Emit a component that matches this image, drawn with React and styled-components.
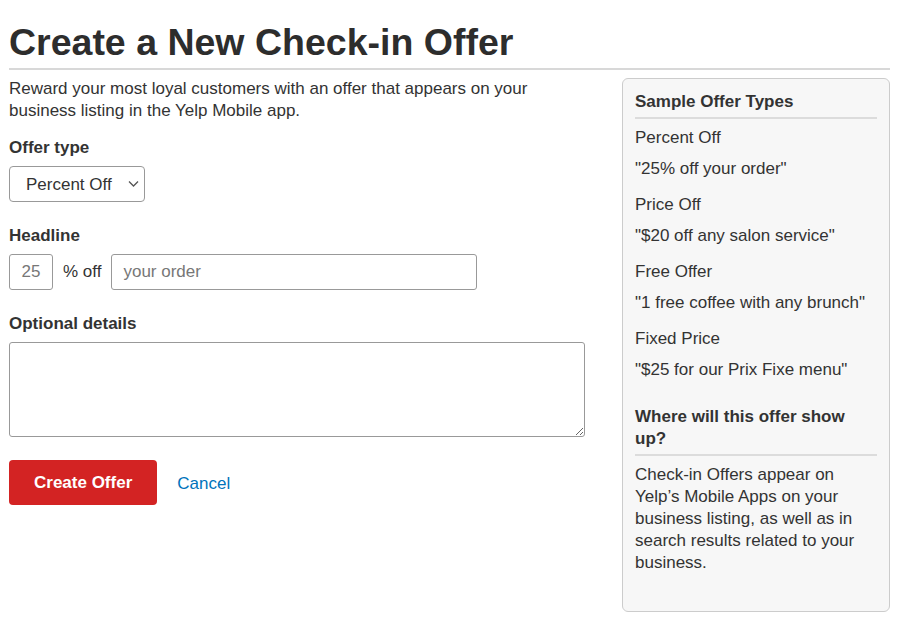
import React from "react";
import styled, { createGlobalStyle } from "styled-components";

const GlobalStyle = createGlobalStyle`
  body {
    margin: 0;
    background: #fff;
    font-family: "Liberation Sans", Arial, Helvetica, sans-serif;
    color: #333;
  }
`;

const Page = styled.div`
  padding: 18px 14px 0 9px;
`;

const Title = styled.h1`
  margin: 0;
  font-size: 37.5px;
  line-height: 48px;
  font-weight: 700;
  color: #2d2d2d;
  padding-bottom: 2px;
  border-bottom: 2px solid #d8d8d8;
`;

const Columns = styled.div`
  display: flex;
  align-items: flex-start;
  gap: 37px;
  padding-top: 8px;
`;

const Main = styled.div`
  width: 576px;
  flex-shrink: 0;
`;

const Intro = styled.p`
  margin: 0 0 15px;
  font-size: 17px;
  line-height: 22px;
`;

const Field = styled.div`
  margin-bottom: 23px;
`;

const Label = styled.label`
  display: block;
  font-size: 17px;
  line-height: 22px;
  font-weight: 700;
  margin-bottom: 7px;
`;

const SelectWrap = styled.div`
  position: relative;
  display: inline-block;
`;

const Select = styled.select`
  appearance: none;
  width: 136px;
  height: 36px;
  padding: 0 30px 0 16px;
  border: 1px solid #999;
  border-radius: 4px;
  background: #fff;
  font-family: inherit;
  font-size: 17px;
  color: #333;
`;

const Chevron = styled.svg`
  position: absolute;
  right: 6px;
  top: 14px;
  pointer-events: none;
`;

const Row = styled.div`
  display: flex;
  align-items: center;
`;

const TextInput = styled.input`
  box-sizing: border-box;
  width: ${(p) => p.$width}px;
  height: 36px;
  padding: 0 ${(p) => (p.$center ? 0 : 11)}px;
  text-align: ${(p) => (p.$center ? "center" : "left")};
  border: 1px solid #999;
  border-radius: 3px;
  font-family: inherit;
  font-size: 17px;
  color: #333;

  &::placeholder {
    color: #777;
  }
`;

const Unit = styled.span`
  font-size: 17px;
  margin: 0 10px 0 10px;
`;

const TextArea = styled.textarea`
  display: block;
  box-sizing: border-box;
  width: 576px;
  height: 95px;
  border: 1px solid #999;
  border-radius: 3px;
  font-family: inherit;
  font-size: 17px;
`;

const Actions = styled.div`
  display: flex;
  align-items: center;
  gap: 20px;
`;

const Button = styled.button`
  height: 45px;
  padding: 0 25px;
  border: none;
  border-radius: 4px;
  background: #d32323;
  color: #fff;
  font-family: inherit;
  font-size: 17px;
  font-weight: 700;
`;

const LinkButton = styled.a`
  font-size: 17px;
  color: #0073bb;
  text-decoration: none;
  margin-top: 2px;
`;

const Sidebar = styled.aside`
  width: 268px;
  box-sizing: border-box;
  padding: 12px 12px 37px;
  background: #f7f7f7;
  border: 1px solid #ccc;
  border-radius: 6px;
  font-size: 17px;
  line-height: 22px;
`;

const SideHeading = styled.h3`
  margin: ${(p) => (p.$spaced ? "25px 0 8px" : "0 0 8px")};
  padding-bottom: 4px;
  font-size: 17px;
  line-height: 22px;
  font-weight: 700;
  border-bottom: 2px solid #dcdcdc;
`;

const OfferList = styled.dl`
  margin: 0;
`;

const OfferName = styled.dt`
  margin: 0 0 9px;
`;

const OfferExample = styled.dd`
  margin: 0 0 14px;

  &:last-child {
    margin-bottom: 0;
  }
`;

const SideText = styled.p`
  margin: 0;
`;

const offers = [
  ["Percent Off", "\"25% off your order\""],
  ["Price Off", "\"$20 off any salon service\""],
  ["Free Offer", "\"1 free coffee with any brunch\""],
  ["Fixed Price", "\"$25 for our Prix Fixe menu\""],
];

export default function App() {
  return (
    <Page>
      <GlobalStyle />
      <Title>Create a New Check-in Offer</Title>
      <Columns>
        <Main>
          <Intro>
            Reward your most loyal customers with an offer that appears on your
            business listing in the Yelp Mobile app.
          </Intro>

          <Field>
            <Label>Offer type</Label>
            <SelectWrap>
              <Select defaultValue="percent">
                <option value="percent">Percent Off</option>
                <option value="price">Price Off</option>
                <option value="free">Free Offer</option>
                <option value="fixed">Fixed Price</option>
              </Select>
              <Chevron width="11" height="8" viewBox="0 0 11 8">
                <path d="M1 1.5 L5.5 6 L10 1.5" fill="none" stroke="#555" strokeWidth="1.3" />
              </Chevron>
            </SelectWrap>
          </Field>

          <Field>
            <Label>Headline</Label>
            <Row>
              <TextInput $width={44} $center placeholder="25" />
              <Unit>% off</Unit>
              <TextInput $width={366} placeholder="your order" />
            </Row>
          </Field>

          <Field>
            <Label>Optional details</Label>
            <TextArea />
          </Field>

          <Actions>
            <Button>Create Offer</Button>
            <LinkButton href="#">Cancel</LinkButton>
          </Actions>
        </Main>

        <Sidebar>
          <SideHeading>Sample Offer Types</SideHeading>
          <OfferList>
            {offers.map(([name, example]) => (
              <React.Fragment key={name}>
                <OfferName>{name}</OfferName>
                <OfferExample>{example}</OfferExample>
              </React.Fragment>
            ))}
          </OfferList>
          <SideHeading $spaced>Where will this offer show up?</SideHeading>
          <SideText>
            Check-in Offers appear on Yelp’s Mobile Apps on your business
            listing, as well as in search results related to your business.
          </SideText>
        </Sidebar>
      </Columns>
    </Page>
  );
}
